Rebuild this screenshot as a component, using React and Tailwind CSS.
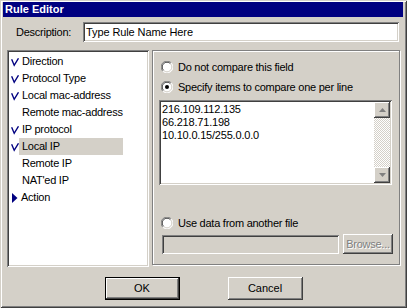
import React from 'react'

const raised =
  'shadow-[inset_-1px_-1px_#404040,inset_1px_1px_#ffffff,inset_-2px_-2px_#808080]'
const sunken =
  'shadow-[inset_1px_1px_#808080,inset_-1px_-1px_#ffffff,inset_2px_2px_#404040,inset_-2px_-2px_#d4d0c8]'

const items = [
  { label: 'Direction', mark: 'check' },
  { label: 'Protocol Type', mark: 'check' },
  { label: 'Local mac-address', mark: 'check' },
  { label: 'Remote mac-address' },
  { label: 'IP protocol', mark: 'check' },
  { label: 'Local IP', mark: 'check', selected: true },
  { label: 'Remote IP' },
  { label: "NAT'ed IP" },
  { label: 'Action', mark: 'arrow' },
]

const Check = () => (
  <svg width="10" height="10" viewBox="0 0 10 10">
    <path d="M0.8 1.5 L4 9.2 L9.3 0.3" fill="none" stroke="#000080" strokeWidth="1.7" />
  </svg>
)

const Arrow = () => (
  <svg width="6" height="10" viewBox="0 0 6 10" className="ml-[1px]">
    <polygon points="0,0 5.5,5 0,10" fill="#000080" />
  </svg>
)

const Radio = ({ checked }) => (
  <svg width="12" height="12" viewBox="0 0 12 12">
    <circle cx="6" cy="6" r="5.5" fill="#ffffff" />
    <path d="M1.8 10.2 A5.5 5.5 0 0 1 10.2 1.8" fill="none" stroke="#808080" strokeWidth="1" />
    <path d="M2.6 9.4 A4.5 4.5 0 0 1 9.4 2.6" fill="none" stroke="#404040" strokeWidth="1" />
    <path d="M10.2 1.8 A5.5 5.5 0 0 1 1.8 10.2" fill="none" stroke="#ffffff" strokeWidth="1" />
    <path d="M9.4 2.6 A4.5 4.5 0 0 1 2.6 9.4" fill="none" stroke="#d4d0c8" strokeWidth="1" />
    {checked && <circle cx="6" cy="6" r="2" fill="#000000" />}
  </svg>
)

const RadioRow = ({ checked, children, className }) => (
  <div className={`flex items-center h-[14px] ml-[2px] ${className}`}>
    <Radio checked={checked} />
    <span className="ml-[5px] tracking-[-0.25px]">{children}</span>
  </div>
)

const ScrollButton = ({ up }) => (
  <div className={`w-[16px] h-[16px] bg-[#d4d0c8] flex items-center justify-center ${raised}`}>
    <svg width="7" height="4" viewBox="0 0 7 4">
      <polygon points={up ? '3.5,0 7,4 0,4' : '0,0 7,0 3.5,4'} fill="#808080" />
    </svg>
  </div>
)

export default function App() {
  return (
    <div className="w-[407px] h-[308px] bg-[#d4d0c8] pt-[2px] pl-[3px] pr-[4px] flex flex-col text-[11px] text-black font-['Liberation_Sans',Arial,sans-serif] shadow-[inset_1px_1px_#d4d0c8,inset_-1px_-1px_#404040,inset_2px_2px_#ffffff,inset_-2px_-2px_#808080]">
      <div className="h-[15px] bg-[#000080] text-white font-bold pl-[2px] leading-[15px]">Rule Editor</div>

      <div className="flex items-center mt-[5px]">
        <div className="w-[80px] pl-[13px] tracking-[-0.25px]">Description:</div>
        <div className={`w-[316px] h-[20px] bg-white pl-[3px] flex items-center tracking-[-0.1px] ${sunken}`}>
          Type Rule Name Here
        </div>
      </div>

      <div className="flex mt-[8px]">
        <div className={`ml-[4px] w-[142px] h-[217px] bg-white pt-[3px] pl-[4px] ${sunken}`}>
          {items.map((it) => (
            <div key={it.label} className="flex items-center h-[17px]">
              <div className="w-[8px] flex items-center">
                {it.mark === 'check' && <Check />}
                {it.mark === 'arrow' && <Arrow />}
              </div>
              <div
                className={`w-[104px] h-[17px] flex items-center tracking-[-0.25px] ${
                  it.selected ? 'bg-[#d4d0c8]' : ''
                } ${it.mark === 'arrow' ? 'pl-[2px]' : 'pl-[3px]'}`}
              >
                {it.label}
              </div>
            </div>
          ))}
        </div>

        <div className="ml-[3px] w-[248px] h-[215px] border border-[#808080] shadow-[inset_1px_1px_#ffffff,1px_1px_#ffffff] pl-[6px] pt-[9px] flex flex-col">
          <RadioRow>Do not compare this field</RadioRow>
          <RadioRow checked className="mt-[6px]">
            Specify items to compare one per line
          </RadioRow>

          <div className={`mt-[6px] w-[233px] h-[85px] bg-white p-[2px] flex ${sunken}`}>
            <div className="flex-1 pl-[1px] pt-[1px] leading-[13px] tracking-[-0.2px]">
              <div>216.109.112.135</div>
              <div>66.218.71.198</div>
              <div>10.10.0.15/255.0.0.0</div>
            </div>
            <div className="w-[16px] flex flex-col">
              <ScrollButton up />
              <div className="flex-1 bg-[image:repeating-conic-gradient(#ffffff_0%_25%,#d4d0c8_0%_50%)] bg-[length:2px_2px]" />
              <ScrollButton />
            </div>
          </div>

          <RadioRow className="mt-[31px]">Use data from another file</RadioRow>

          <div className="flex items-center mt-[4px]">
            <div className={`ml-[3px] w-[177px] h-[19px] bg-[#d4d0c8] ${sunken}`} />
            <div
              className={`ml-[4px] w-[50px] h-[20px] flex items-center justify-center text-[#808080] tracking-[-0.25px] [text-shadow:1px_1px_#ffffff] ${raised}`}
            >
              Browse...
            </div>
          </div>
        </div>
      </div>

      <div className="flex justify-center gap-[48px] mt-[10px] pl-[1px]">
        <div className="w-[75px] h-[23px] border border-black">
          <div className={`w-full h-full flex items-center justify-center ${raised}`}>OK</div>
        </div>
        <div className={`w-[75px] h-[23px] flex items-center justify-center ${raised}`}>Cancel</div>
      </div>
    </div>
  )
}
